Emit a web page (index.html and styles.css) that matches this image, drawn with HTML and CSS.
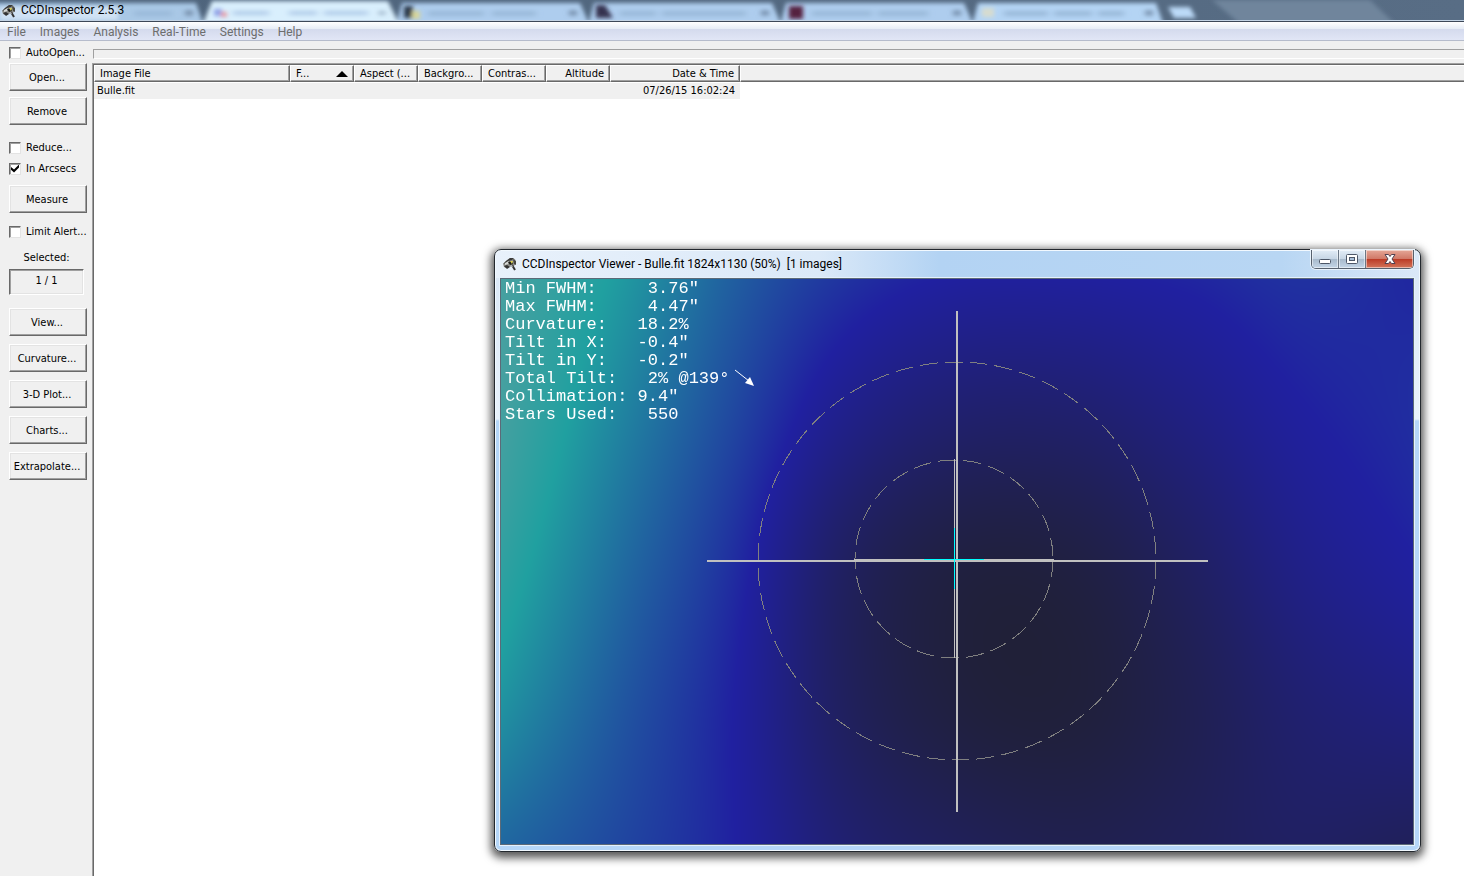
FILE: index.html
```html
<!DOCTYPE html>
<html lang="en">
<head>
    <meta charset="UTF-8">
    <meta name="viewport" content="width=device-width, initial-scale=1.0">
    <title>CCDInspector 2.5.3</title>
    <link rel="stylesheet" href="styles.css">
</head>
<body>
    <!-- shared application icon -->
    <svg width="0" height="0" class="defs" aria-hidden="true">
        <symbol id="app-icon" viewBox="0 0 14 14">
            <path d="M0 7 L3 4 L7 1 L12 2 L13 6 L11 9 L6 10 L3 11 L1 10 Z" fill="#8f908c"/>
            <path d="M0 7 L3 4 L7 1 L11 1 L9 3 L5 4 L3 6 Z" fill="#3a3a38"/>
            <path d="M10 2 L13 4 L13 8 L11 7 Z" fill="#454540"/>
            <path d="M2 6 L6 4 L5 7 L2 8 Z" fill="#d6d8d6"/>
            <path d="M5 5 L9 4 L10 7 L7 8 Z" fill="#1c1c18"/>
            <path d="M7 4 L10 4 L9 7 Z" fill="#d9cf55"/>
            <path d="M1 9 L4 8 L7 10 L4 12 Z" fill="#333"/>
            <path d="M9 8 L12 13" stroke="#333" stroke-width="2"/>
            <path d="M7 9 L9 8 L10 10 Z" fill="#c9ccd0"/>
        </symbol>
    </svg>

    <header class="titlebar">
        <svg class="glass" width="1464" height="20" aria-hidden="true">
            <defs>
                <filter id="soft" x="-5%" y="-50%" width="110%" height="200%"><feGaussianBlur stdDeviation="2"/></filter>
                <filter id="softer" x="-5%" y="-50%" width="110%" height="200%"><feGaussianBlur stdDeviation="3 2"/></filter>
            </defs>
            <g filter="url(#soft)">
                <path d="M1212 0 H1370 L1395 24 H1240 Z" fill="#70859c"/>
                <path d="M-10 3 H196 L204 26 H-10 Z" fill="#a9c8e6"/>
                <path d="M402 3 H580 L590 26 H396 Z" fill="#aecdee"/>
                <path d="M594 3 H772 L782 26 H588 Z" fill="#aecdee"/>
                <path d="M786 3 H964 L974 26 H780 Z" fill="#aecdee"/>
                <path d="M978 3 H1156 L1164 26 H972 Z" fill="#b4d4f4"/>
                <path d="M1168 7 H1190 L1196 18 H1174 Z" fill="#bcdaf8"/>
                <path d="M212 1 H388 L400 26 H202 Z" fill="#d9effd"/>
                <path d="M0 7 H118 V20 H0 Z" fill="#d0e2f4"/>
            </g>
            <g filter="url(#softer)">
                <g fill="#9ab9d9">
                    <path d="M134 11h38v5h-38z M428 11h56v5h-56z M492 11h44v5h-44z M620 11h36v5h-36z M662 11h84v5h-84z M812 11h60v5h-60z M878 11h50v5h-50z M1004 11h44v5h-44z M1054 11h38v5h-38z M1098 11h26v5h-26z"/>
                    <path d="M233 11h36v4h-36z M289 11h28v4h-28z M324 11h44v4h-44z" fill="#b0cbe8"/>
                </g>
                <g fill="#5f7590">
                    <circle cx="189" cy="13" r="3"/><circle cx="382" cy="13" r="2"/><circle cx="573" cy="13" r="3"/>
                    <circle cx="765" cy="13" r="3"/><circle cx="957" cy="13" r="3"/><circle cx="1149" cy="13" r="3"/>
                </g>
            </g>
            <g filter="url(#soft)">
                <path d="M214 9h8v7h-8z" fill="#8fa2e6"/><path d="M221 12h6v5h-6z" fill="#e79aa2"/>
                <path d="M404 6h9v12h-9z" fill="#293848"/><path d="M412 11h8v8h-8z" fill="#d8d69a"/>
                <path d="M596 5h9l8 13h-17z" fill="#36304f"/>
                <path d="M789 6h14v13h-14z" fill="#55213f"/>
                <path d="M982 8h12v9h-12z" fill="#d7dccf"/>
            </g>
        </svg>
        <div class="caption">
            <svg class="app-icon"><use href="#app-icon"/></svg>
            <h1>CCDInspector 2.5.3</h1>
        </div>
    </header>

    <nav class="menubar">
        <a href="#">File</a>
        <a href="#">Images</a>
        <a href="#">Analysis</a>
        <a href="#">Real-Time</a>
        <a href="#">Settings</a>
        <a href="#">Help</a>
    </nav>

    <div class="workspace">
        <aside class="sidebar">
            <label class="check"><input type="checkbox">AutoOpen...</label>
            <div class="group files">
                <button>Open...</button>
                <button>Remove</button>
            </div>
            <label class="check"><input type="checkbox">Reduce...</label>
            <label class="check"><input type="checkbox" checked>In Arcsecs</label>
            <div class="group measure">
                <button>Measure</button>
            </div>
            <label class="check"><input type="checkbox">Limit Alert...</label>
            <div class="selected">
                <span>Selected:</span>
                <output>1 / 1</output>
            </div>
            <div class="group plots">
                <button>View...</button>
                <button>Curvature...</button>
                <button>3-D Plot...</button>
                <button>Charts...</button>
                <button>Extrapolate...</button>
            </div>
        </aside>

        <main class="content">
            <div class="progress"></div>
            <div class="list">
                <table>
                    <colgroup>
                        <col class="name"><col class="num"><col class="num"><col class="num">
                        <col class="num"><col class="num"><col class="date"><col>
                    </colgroup>
                    <thead>
                        <tr>
                            <th>Image File</th>
                            <th><span class="sorted">F...<i class="arrow-up"></i></span></th>
                            <th>Aspect (...</th>
                            <th>Backgro...</th>
                            <th>Contras...</th>
                            <th class="right">Altitude</th>
                            <th class="right">Date &amp; Time</th>
                            <td></td>
                        </tr>
                    </thead>
                    <tbody>
                        <tr>
                            <td>Bulle.fit</td>
                            <td></td>
                            <td></td>
                            <td></td>
                            <td></td>
                            <td></td>
                            <td class="right">07/26/15 16:02:24</td>
                            <td class="rest"></td>
                        </tr>
                    </tbody>
                </table>
            </div>
        </main>
    </div>

    <section class="viewer">
        <div class="viewer-title">
            <svg class="app-icon"><use href="#app-icon"/></svg>
            <h2>CCDInspector Viewer - Bulle.fit 1824x1130 (50%)&nbsp; [1 images]</h2>
            <div class="controls">
                <button class="min" aria-label="Minimize">
                    <svg width="14" height="14"><rect x="1.5" y="7.5" width="11" height="4" rx="1" fill="#fff" stroke="#4c5667"/></svg>
                </button>
                <button class="max" aria-label="Maximize">
                    <svg width="14" height="14"><rect x="1.5" y="2.5" width="11" height="9" rx="1" fill="#fff" stroke="#4c5667"/><rect x="4.5" y="5.5" width="5" height="3" fill="#a9bfd8" stroke="#4c5667"/></svg>
                </button>
                <button class="close" aria-label="Close">
                    <svg width="14" height="14"><path d="M2 2.500h3.500l1.500 2 1.500-2H12L9 7l3 4.500H8.500L7 9.500l-1.500 2H2L5 7z" fill="#fff" stroke="#514050"/></svg>
                </button>
            </div>
        </div>
        <div class="stage">
            <canvas id="map" width="912" height="565"></canvas>
            <svg class="reticle" viewBox="0 0 912 565" shape-rendering="crispEdges" fill="none">
                <g stroke="#808080" stroke-dasharray="18 7">
                    <circle cx="456" cy="282" r="199"/>
                    <circle cx="453" cy="280" r="99"/>
                </g>
                <g fill="#c0c0c0">
                    <rect x="206" y="281" width="501" height="2"/>
                    <rect x="455" y="32" width="2" height="501"/>
                    <rect x="353" y="280" width="200" height="1"/>
                    <rect x="453" y="180" width="1" height="199"/>
                </g>
                <g fill="#00ffff">
                    <rect x="423" y="280" width="60" height="1"/>
                    <rect x="453" y="249" width="1" height="61"/>
                </g>
                <g shape-rendering="auto">
                    <path d="M234 91 L248 102" stroke="#fff"/>
                    <path d="M253 107 L244 104 L249 98 Z" fill="#fff"/>
                </g>
            </svg>
            <pre class="stats">Min FWHM:     3.76"
Max FWHM:     4.47"
Curvature:   18.2%
Tilt in X:   -0.4"
Tilt in Y:   -0.2"
Total Tilt:   2% @139°
Collimation: 9.4"
Stars Used:   550</pre>
        </div>
    </section>

    <script src="map.js"></script>
</body>
</html>
```

FILE: styles.css
```css
* {
    box-sizing: border-box;
}

body {
    margin: 0;
    height: 100vh;
    display: flex;
    flex-direction: column;
    overflow: hidden;
    background-color: #f0f0f0;
    color: #000;
    font-family: Tahoma, 'DejaVu Sans Condensed', 'DejaVu Sans', sans-serif;
    font-size: 11px;
}

.defs {
    position: absolute;
}

h1, h2 {
    margin: 0;
    font-family: 'Segoe UI', Roboto, sans-serif;
    font-size: 12px;
    font-weight: normal;
    line-height: 21px;
}

.app-icon {
    width: 14px;
    height: 14px;
    flex: none;
}

/* main window */
.titlebar {
    position: relative;
    flex: none;
    height: 22px;
    overflow: hidden;
    background: linear-gradient(to right, #4d637b, #586d85);
    border-bottom: 1px solid #3d4858;
    box-shadow: inset 0 -1px #c3d3e4;
}

.glass {
    position: absolute;
    left: 0;
    top: 0;
}

.caption {
    position: relative;
    display: flex;
    align-items: center;
    gap: 5px;
    padding-left: 2px;
}

.menubar {
    flex: none;
    display: flex;
    gap: 14px;
    height: 19px;
    padding-left: 7px;
    background: linear-gradient(#ffffff, #e6ecf6 7px, #d4daed 7px, #e1e6f6);
    border-bottom: 1px solid #b6bccc;
}

.menubar a {
    color: #6d6d6d;
    font-family: 'Segoe UI', Roboto, sans-serif;
    font-size: 12px;
    line-height: 20px;
    text-decoration: none;
}

.workspace {
    flex: 1;
    display: flex;
    min-height: 0;
}

/* left column */
.sidebar {
    flex: none;
    width: 92px;
    padding: 1px 0 0 9px;
}

.check {
    display: flex;
    align-items: center;
    gap: 5px;
    height: 21px;
    white-space: nowrap;
}

.check input {
    appearance: none;
    flex: none;
    width: 12px;
    height: 12px;
    margin: 0;
    background-color: #fff;
    border: 1px solid;
    border-color: #696969 #e3e3e3 #e3e3e3 #696969;
    box-shadow: inset 1px 1px #a0a0a0;
}

.check input:checked::after {
    content: "";
    display: block;
    width: 8px;
    height: 8px;
    margin: 1px;
    background-color: #000;
    clip-path: polygon(0 30%, 38% 62%, 100% 0, 100% 38%, 38% 100%, 0 66%);
}

.group {
    display: flex;
    flex-direction: column;
}

.group button {
    width: 78px;
    height: 28px;
    padding: 0 2px 0 0;
    background-color: #f0f0f0;
    border: 1px solid;
    border-color: #fff #696969 #696969 #fff;
    box-shadow: inset -1px -1px #a0a0a0, inset 1px 1px #e3e3e3;
    font: inherit;
    white-space: nowrap;
}

.files {
    gap: 6px;
    margin-bottom: 12px;
}

.measure {
    margin: 6px 0 8px;
}

.plots {
    gap: 8px;
    margin-top: 13px;
}

.selected {
    width: 75px;
    margin-top: 5px;
    text-align: center;
    line-height: 21px;
}

.selected span, .selected output {
    display: block;
}

.selected output {
    height: 26px;
    margin-top: 1px;
    border: 1px solid;
    border-color: #696969 #fff #fff #696969;
    box-shadow: inset 1px 1px #a0a0a0, inset -1px -1px #e3e3e3;
}

/* image list */
.content {
    flex: 1;
    min-width: 0;
    display: flex;
    flex-direction: column;
}

.progress {
    height: 10px;
    margin: 8px 0 4px 1px;
    border: solid #a0a0a0;
    border-width: 1px 0 0 1px;
    border-bottom: 1px solid #fff;
}

.list {
    flex: 1;
    background-color: #fff;
    border: solid #a0a0a0;
    border-width: 1px 0 0 1px;
    box-shadow: inset 1px 1px #696969;
    padding: 1px 0 0 1px;
}

table {
    width: 100%;
    table-layout: fixed;
    border-collapse: separate;
    border-spacing: 0;
}

col.name {
    width: 196px;
}

col.num {
    width: 64px;
}

col.date {
    width: 130px;
}

th, thead td {
    height: 17px;
    padding: 1px 5px 0;
    background-color: #f0f0f0;
    border: 1px solid;
    border-color: #fff #696969 #696969 #fff;
    box-shadow: inset -1px -1px #a0a0a0;
    font-weight: normal;
    line-height: 14px;
    text-align: left;
    white-space: nowrap;
}

thead td {
    border-right: 0;
    box-shadow: inset 0 -1px #a0a0a0;
}

tbody td {
    height: 17px;
    padding: 1px 5px 0 3px;
    background: linear-gradient(#fff 1px, #f0f0f0 1px);
    line-height: 16px;
}

tbody .rest {
    background: none;
}

th.right, td.right {
    text-align: right;
}

.sorted {
    display: flex;
    justify-content: space-between;
    align-items: center;
}

.arrow-up {
    border: 6px solid transparent;
    border-top: 0;
    border-bottom-color: #000;
}

/* floating viewer window */
.viewer {
    position: absolute;
    left: 494px;
    right: 43px;
    top: 249px;
    bottom: 24px;
    display: flex;
    flex-direction: column;
    padding: 0 6px 6px 5px;
    background: linear-gradient(to right, #e8f1fb, #dbe9f8 35%, #b3d3f3 48%, #b8d6f3 85%, #dbe8f8) top / 100% 28px no-repeat,
        linear-gradient(#d9e7f6, #e9f2fb 169px, #b5d6f8 171px, #b5d6f8);
    border: 1px solid #23282e;
    border-radius: 7px;
    box-shadow: inset 0 0 0 1px #f2f9ff, 0 3px 9px 3px rgba(0, 0, 0, 0.65);
}

.viewer-title {
    flex: none;
    display: flex;
    align-items: flex-start;
    height: 28px;
    padding-left: 3px;
}

.viewer-title .app-icon {
    margin-top: 7px;
}

.viewer-title h2 {
    flex: 1;
    margin: 4px 0 0 5px;
    white-space: nowrap;
}

.controls {
    display: flex;
    height: 19px;
    border: 1px solid #57616e;
    border-top: 0;
    border-radius: 0 0 5px 5px;
    overflow: hidden;
    box-shadow: 0 0 0 1px #e9f3fd;
}

.controls button {
    display: flex;
    align-items: center;
    justify-content: center;
    width: 27px;
    padding: 0;
    border: 0;
    border-right: 1px solid #6b7785;
    background: linear-gradient(#e3edf7, #c6d5e4 50%, #a7b9cb 50%, #c3d5e7);
    box-shadow: inset 0 0 0 1px rgba(255, 255, 255, 0.5);
}

.controls .close {
    width: 47px;
    border-right: 0;
    background: linear-gradient(#e5a797, #d07766 50%, #bb3a25 50%, #d3745a);
}

.stage {
    position: relative;
    flex: 1;
    min-height: 0;
    border: 1px solid #5c6a78;
    box-shadow: 0 0 0 1px #e5f1fc;
}

#map, .reticle {
    position: absolute;
    left: 0;
    top: 0;
    width: 100%;
    height: 100%;
}

.stats {
    position: relative;
    margin: 0;
    padding: 1px 4px;
    color: #fff;
    font-family: 'Courier New', 'Liberation Mono', monospace;
    font-size: 17px;
    line-height: 18px;
}
```

FILE: map.js
```js
// FWHM samples over the frame, 9 columns by 5 rows
const samples = [
    [2.30, 1.97, 1.50, 1.15, 0.98, 0.97, 1.03, 1.13, 1.06],
    [2.28, 1.80, 1.32, 0.80, 0.54, 0.53, 0.72, 0.97, 1.10],
    [2.13, 1.62, 1.13, 0.45, 0.16, 0.17, 0.43, 0.78, 0.99],
    [1.90, 1.45, 1.02, 0.42, 0.14, 0.10, 0.29, 0.57, 0.72],
    [1.56, 1.31, 1.02, 0.58, 0.37, 0.28, 0.35, 0.45, 0.38]
];

const ramp = [[32, 32, 48], [32, 32, 160], [32, 160, 160], [160, 160, 160]];

// Catmull-Rom interpolation through a list of values
function curve(values, t) {
    const last = values.length - 1;
    const i = Math.min(Math.floor(t), last - 1);
    const f = t - i;
    const b = values[i];
    const c = values[i + 1];
    const a = i > 0 ? values[i - 1] : 2 * b - c;
    const d = i + 2 <= last ? values[i + 2] : 2 * c - b;
    return b + 0.5 * f * (c - a + f * (2 * a - 5 * b + 4 * c - d + f * (3 * (b - c) + d - a)));
}

const canvas = document.getElementById('map');
const ctx = canvas.getContext('2d');
const image = ctx.createImageData(canvas.width, canvas.height);
let p = 0;

for (let y = 0; y < canvas.height; y++) {
    const v = y / (canvas.height - 1) * 4;
    const row = samples[0].map((_, col) => curve(samples.map(r => r[col]), v));
    for (let x = 0; x < canvas.width; x++) {
        const value = Math.max(0, Math.min(2.99, curve(row, x / (canvas.width - 1) * 8)));
        const step = Math.floor(value);
        for (let k = 0; k < 3; k++) {
            image.data[p++] = ramp[step][k] + (ramp[step + 1][k] - ramp[step][k]) * (value - step);
        }
        image.data[p++] = 255;
    }
}

ctx.putImageData(image, 0, 0);
```
